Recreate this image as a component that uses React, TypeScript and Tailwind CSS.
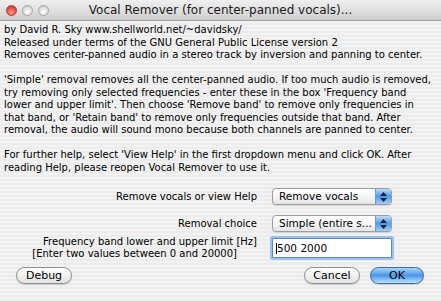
import React from "react";

const body = "font-['Lucida_Grande','DejaVu_Sans',sans-serif]";

function Popup({ value }: { value: string }) {
  return (
    <div className="flex h-[17px] w-[120px] items-stretch rounded-[4px] border border-[#9c9c9c] bg-gradient-to-b from-white via-[#f6f6f6] to-[#e4e4e4] shadow-[0_1px_1px_rgba(0,0,0,0.12)]">
      <span className="flex-1 whitespace-nowrap pl-[6px] text-[10.5px] leading-[15px] text-black">{value}</span>
      <span className="flex w-[16px] flex-col items-center justify-center gap-[2px] rounded-r-[3px] border-l border-[#7399c9] bg-gradient-to-b from-[#b9dcfb] via-[#4f9ae8] to-[#9fd0fa]">
        <svg width="7" height="4" viewBox="0 0 7 4">
          <path d="M0 4 L3.5 0 L7 4 Z" fill="#13233d" />
        </svg>
        <svg width="7" height="4" viewBox="0 0 7 4">
          <path d="M0 0 L3.5 4 L7 0 Z" fill="#13233d" />
        </svg>
      </span>
    </div>
  );
}

function PillButton({ label, primary = false, width }: { label: string; primary?: boolean; width: string }) {
  return (
    <div
      className={`flex h-[17px] ${width} items-center justify-center rounded-full border text-[11px] leading-none shadow-[0_1px_1px_rgba(0,0,0,0.15)] ${
        primary
          ? "border-[#3b6ea8] bg-gradient-to-b from-[#a9d3fa] via-[#4a97e8] to-[#bfe1fd] text-black"
          : "border-[#8e8e8e] bg-gradient-to-b from-white via-[#f1f1f1] to-[#e2e2e2] text-black"
      }`}
    >
      {label}
    </div>
  );
}

export default function App() {
  return (
    <div className={`${body} h-[301px] w-[441px] overflow-hidden bg-[#ececec] text-black`}>
      {/* title bar */}
      <div className="relative flex h-[21px] items-center justify-center rounded-t-[5px] border-b border-[#a0a0a0] bg-gradient-to-b from-[#efefef] via-[#e0e0e0] to-[#cdcdcd]">
        <div className="absolute left-[6px] top-[5px] flex gap-[5px]">
          <span className="h-[11px] w-[11px] rounded-full border border-[#a8423d] bg-[radial-gradient(circle_at_50%_70%,#ff9a8c,#e24c3f_60%,#b6352c)]" />
          <span className="h-[11px] w-[11px] rounded-full border border-[#a4a4a4] bg-[radial-gradient(circle_at_50%_70%,#ffffff,#dedede_60%,#c2c2c2)]" />
          <span className="h-[11px] w-[11px] rounded-full border border-[#a4a4a4] bg-[radial-gradient(circle_at_50%_70%,#ffffff,#dedede_60%,#c2c2c2)]" />
        </div>
        <span className="text-[12px] text-[#1a1a1a]">Vocal Remover (for center-panned vocals)...</span>
      </div>

      {/* pinstriped content */}
      <div className="h-[280px] bg-[repeating-linear-gradient(0deg,#ececec_0px,#ececec_2px,#f2f2f2_2px,#f2f2f2_4px)] px-[4px] pt-[3px]">
        <div className="whitespace-nowrap text-[10px] leading-[12.5px]">
          <div>by David R. Sky www.shellworld.net/~davidsky/</div>
          <div>Released under terms of the GNU General Public License version 2</div>
          <div>Removes center-panned audio in a stereo track by inversion and panning to center.</div>
          <div>&nbsp;</div>
          <div>'Simple' removal removes all the center-panned audio. If too much audio is removed,</div>
          <div>try removing only selected frequencies - enter these in the box 'Frequency band</div>
          <div>lower and upper limit'. Then choose 'Remove band' to remove only frequencies in</div>
          <div>that band, or 'Retain band' to remove only frequencies outside that band. After</div>
          <div>removal, the audio will sound mono because both channels are panned to center.</div>
          <div>&nbsp;</div>
          <div>For further help, select 'View Help' in the first dropdown menu and click OK. After</div>
          <div>reading Help, please reopen Vocal Remover to use it.</div>
        </div>

        <div className="mt-[14px] flex flex-col text-[10px]">
          <div className="flex items-center gap-[15px]">
            <span className="w-[253px] text-right">Remove vocals or view Help</span>
            <Popup value="Remove vocals" />
          </div>
          <div className="mt-[10px] flex items-center gap-[15px]">
            <span className="w-[253px] text-right">Removal choice</span>
            <Popup value="Simple (entire s..." />
          </div>
          <div className="mt-[4px] flex items-center gap-[15px]">
            <div className="w-[253px] text-right leading-[12px]">
              <div>Frequency band lower and upper limit [Hz]</div>
              <div className="pr-[20px]">[Enter two values between 0 and 20000]</div>
            </div>
            <div className="flex h-[20px] w-[120px] items-center rounded-[1px] border border-[#5f87b9] bg-white pl-[3px] shadow-[0_0_0_2px_#9cc1ea]">
              <span className="h-[11px] w-px bg-black" />
              <span className="text-[10.5px] leading-none">500 2000</span>
            </div>
          </div>
        </div>

        <div className="mt-[7px] flex items-center px-[12px] pr-[13px]">
          <PillButton label="Debug" width="w-[56px]" />
          <div className="ml-auto flex gap-[10px]">
            <PillButton label="Cancel" width="w-[56px]" />
            <PillButton label="OK" primary width="w-[54px]" />
          </div>
        </div>
      </div>
    </div>
  );
}
